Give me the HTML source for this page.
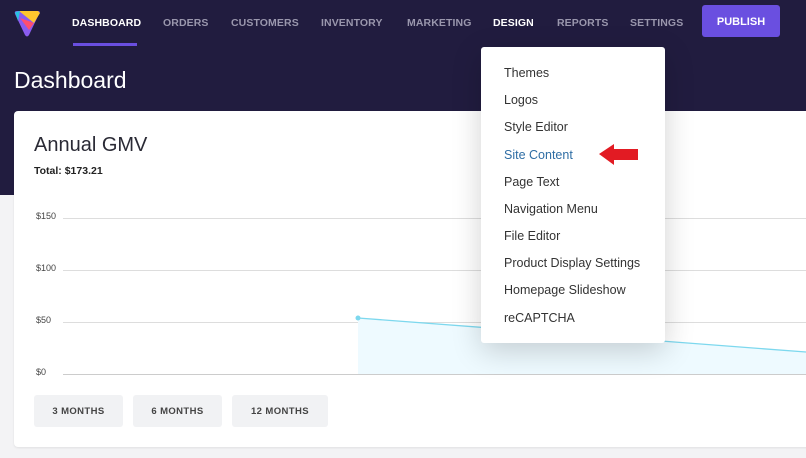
<!DOCTYPE html><html><head><meta charset="utf-8"><style>
*{margin:0;padding:0;box-sizing:border-box}
body{width:806px;height:458px;overflow:hidden;background:#f3f3f5;font-family:"Liberation Sans",sans-serif;position:relative}
.top{position:absolute;left:0;top:0;width:806px;height:195px;background:#211c3f}
.nav a{position:absolute;top:17px;font-size:10.5px;font-weight:bold;color:#9a97ad;letter-spacing:.1px}
.nav a.act{color:#fff}
.ul{position:absolute;left:73px;top:43px;width:64px;height:3px;background:#6a4fe0}
.pub{position:absolute;left:702px;top:5px;width:78px;height:32px;background:#6a4fe0;border-radius:3px;color:#fff;font-size:11px;font-weight:bold;text-align:center;line-height:34px}
h1{position:absolute;left:14px;top:67px;font-size:23px;font-weight:normal;color:#fff}
.card{position:absolute;left:14px;top:111px;width:800px;height:336px;background:#fff;border-radius:4px;box-shadow:0 1px 2px rgba(0,0,0,.08)}
.t{position:absolute;left:34px;top:134px;font-size:20px;color:#2a2a35}
.tot{position:absolute;left:34px;top:165px;font-size:10.5px;font-weight:bold;color:#222}
.gl{position:absolute;left:63px;width:743px;height:1px;background:#ddd}
.yl{position:absolute;left:36px;font-size:9px;color:#444}
.btn{position:absolute;top:395px;height:32px;background:#f1f2f4;border-radius:3px;font-size:9.5px;font-weight:bold;color:#444;text-align:center;line-height:34px;letter-spacing:.4px}
.dd{position:absolute;left:481px;top:47px;width:184px;height:296px;background:#fff;border-radius:3px;box-shadow:0 8px 30px rgba(0,0,0,.18)}
.dd div{position:absolute;left:23px;font-size:12.5px;color:#333}
</style></head><body>
<div class="top"></div>
<svg style="position:absolute;left:12px;top:8px" width="30" height="30" viewBox="0 0 30 30">
<path d="M3,6 Q2,3 5,3 L26,3 Q29,3 27,6 L17,27 Q15,30 13,27 Z" fill="#8a5cf0"/>
<polygon points="7,3 26,3 28,5 22,15" fill="#ffc62e"/>
<polygon points="8,10 22,15 17,22" fill="#ff4f6e"/>
<polygon points="3,4 8,3 6,13" fill="#27c3e0"/>
</svg>
<div class="nav">
<a class="act" style="left:72px">DASHBOARD</a>
<a style="left:163px">ORDERS</a>
<a style="left:231px">CUSTOMERS</a>
<a style="left:321px">INVENTORY</a>
<a style="left:407px">MARKETING</a>
<a class="act" style="left:493px">DESIGN</a>
<a style="left:557px">REPORTS</a>
<a style="left:630px">SETTINGS</a>
</div>
<div class="ul"></div>
<div class="pub">PUBLISH</div>
<h1>Dashboard</h1>
<div class="card"></div>
<div class="t">Annual GMV</div>
<div class="tot">Total: $173.21</div>
<div class="yl" style="top:211px">$150</div><div class="gl" style="top:218px"></div>
<div class="yl" style="top:263px">$100</div><div class="gl" style="top:270px"></div>
<div class="yl" style="top:315px">$50</div><div class="gl" style="top:322px"></div>
<div class="yl" style="top:367px">$0</div><div class="gl" style="top:374px;background:#ccc"></div>
<svg style="position:absolute;left:0;top:0" width="806" height="458">
<polygon points="358,318 806,352 806,374 358,374" fill="#eefaff"/>
<polyline points="358,318 806,352" stroke="#7dd8ee" stroke-width="1.3" fill="none"/>
<circle cx="358" cy="318" r="2.5" fill="#7dd8ee"/>
</svg>
<div class="btn" style="left:34px;width:89px">3 MONTHS</div>
<div class="btn" style="left:133px;width:89px">6 MONTHS</div>
<div class="btn" style="left:232px;width:96px">12 MONTHS</div>
<div class="dd">
<div style="top:19px">Themes</div>
<div style="top:46px">Logos</div>
<div style="top:73px">Style Editor</div>
<div style="top:101px;color:#2e6da4">Site Content</div>
<div style="top:128px">Page Text</div>
<div style="top:155px">Navigation Menu</div>
<div style="top:182px">File Editor</div>
<div style="top:209px">Product Display Settings</div>
<div style="top:236px">Homepage Slideshow</div>
<div style="top:264px">reCAPTCHA</div>
</div>
<svg style="position:absolute;left:598px;top:142px" width="42" height="24" viewBox="0 0 42 24">
<polygon points="1,12 16,2 16,7 40,7 40,18 16,18 16,23" fill="#e21b23"/>
</svg>
</body></html>
